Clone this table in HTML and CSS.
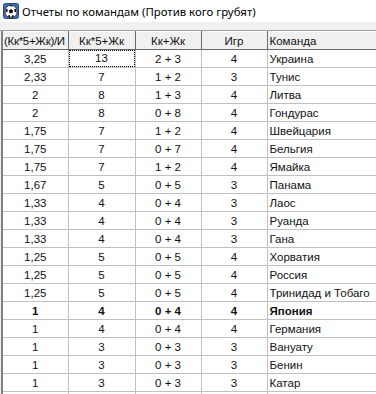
FILE: index.html
```html
<!DOCTYPE html>
<html>
<head>
  <meta charset="utf-8">
  <link rel="stylesheet" href="styles.css">
</head>
<body>
  <div class="titlebar">
    <svg class="app-icon" width="16" height="16" viewBox="0 0 16 16">
      <rect x="0.5" y="0.5" width="15" height="15" rx="2" fill="#3d6fb6" stroke="#24497f"/>
      <circle cx="8" cy="8.5" r="6.2" fill="#fff" stroke="#222" stroke-width="0.8"/>
      <polygon points="8,6 10.2,7.6 9.4,10.2 6.6,10.2 5.8,7.6" fill="#111"/>
      <path d="M3 5.5 L4.8 6.6 L4.4 9 L2.4 9.5 Z" fill="#111"/>
      <path d="M13 5.5 L11.2 6.6 L11.6 9 L13.6 9.5 Z" fill="#111"/>
      <path d="M6.2 2.6 L8 3.8 L9.8 2.6 Z" fill="#111"/>
      <path d="M5.2 12.2 L7 12.2 L7.6 14.4 L5.4 14 Z" fill="#111"/>
      <path d="M10.8 12.2 L9 12.2 L8.4 14.4 L10.6 14 Z" fill="#111"/>
    </svg>
    <span class="title-text">Отчеты по командам (Против кого грубят)</span>
  </div>

  <div class="toolbar-gap"></div>

  <div class="grid-wrap">
    <table class="grid">
      <colgroup>
        <col class="c1"><col class="c2"><col class="c3"><col class="c4"><col class="c5">
      </colgroup>
      <thead>
        <tr>
          <th class="tight">(Кк*5+Жк)/И</th>
          <th>Кк*5+Жк</th>
          <th>Кк+Жк</th>
          <th>Игр</th>
          <th class="left">Команда</th>
        </tr>
      </thead>
      <tbody>
        <tr><td>3,25</td><td class="focus"><span>13</span></td><td>2 + 3</td><td>4</td><td class="left">Украина</td></tr>
        <tr><td>2,33</td><td>7</td><td>1 + 2</td><td>3</td><td class="left">Тунис</td></tr>
        <tr><td>2</td><td>8</td><td>1 + 3</td><td>4</td><td class="left">Литва</td></tr>
        <tr><td>2</td><td>8</td><td>0 + 8</td><td>4</td><td class="left">Гондурас</td></tr>
        <tr><td>1,75</td><td>7</td><td>1 + 2</td><td>4</td><td class="left">Швейцария</td></tr>
        <tr><td>1,75</td><td>7</td><td>0 + 7</td><td>4</td><td class="left">Бельгия</td></tr>
        <tr><td>1,75</td><td>7</td><td>1 + 2</td><td>4</td><td class="left">Ямайка</td></tr>
        <tr><td>1,67</td><td>5</td><td>0 + 5</td><td>3</td><td class="left">Панама</td></tr>
        <tr><td>1,33</td><td>4</td><td>0 + 4</td><td>3</td><td class="left">Лаос</td></tr>
        <tr><td>1,33</td><td>4</td><td>0 + 4</td><td>3</td><td class="left">Руанда</td></tr>
        <tr><td>1,33</td><td>4</td><td>0 + 4</td><td>3</td><td class="left">Гана</td></tr>
        <tr><td>1,25</td><td>5</td><td>0 + 5</td><td>4</td><td class="left">Хорватия</td></tr>
        <tr><td>1,25</td><td>5</td><td>0 + 5</td><td>4</td><td class="left">Россия</td></tr>
        <tr><td>1,25</td><td>5</td><td>0 + 5</td><td>4</td><td class="left">Тринидад и Тобаго</td></tr>
        <tr class="bold"><td>1</td><td>4</td><td>0 + 4</td><td>4</td><td class="left">Япония</td></tr>
        <tr><td>1</td><td>4</td><td>0 + 4</td><td>4</td><td class="left">Германия</td></tr>
        <tr><td>1</td><td>3</td><td>0 + 3</td><td>3</td><td class="left">Вануату</td></tr>
        <tr><td>1</td><td>3</td><td>0 + 3</td><td>3</td><td class="left">Бенин</td></tr>
        <tr><td>1</td><td>3</td><td>0 + 3</td><td>3</td><td class="left">Катар</td></tr>
        <tr><td>&nbsp;</td><td></td><td></td><td></td><td class="left"></td></tr>
      </tbody>
    </table>
  </div>
</body>
</html>
```

FILE: styles.css
```css
body {
  margin: 0;
  width: 376px;
  height: 394px;
  overflow: hidden;
  background: #f0f0f0;
  font-family: "Liberation Sans", Arial, sans-serif;
  color: #000;
}

.titlebar {
  height: 22px;
  display: flex;
  align-items: center;
  background: #fff;
  padding-left: 3px;
}

.app-icon {
  flex: none;
  margin-right: 3px;
}

.title-text {
  font-family: "Noto Sans", "Open Sans", sans-serif;
  font-size: 11.4px;
  color: #000;
}

.toolbar-gap {
  height: 8px;
  background: #f0f0f0;
  border-bottom: 1px solid #a0a0a0;
}

.grid-wrap {
  border-left: 2px solid #808080;
  margin-left: 1px;
  background: #fff;
  height: 363px;
  overflow: hidden;
}

.grid {
  border-collapse: collapse;
  table-layout: fixed;
  width: 402px;
  font-size: 11.5px;
  color: #111;
}

.c1 { width: 65px; }
.c2 { width: 67px; }
.c3 { width: 66px; }
.c4 { width: 66px; }
.c5 { width: 138px; }

.grid th {
  height: 17px;
  padding: 0;
  background: #f0f0f0;
  font-weight: normal;
  text-align: center;
  border-right: 1px solid #696969;
  border-bottom: 1px solid #696969;
  border-top: 1px solid #fff;
  white-space: nowrap;
  overflow: hidden;
}

.grid th.tight {
  text-align: left;
  padding-left: 1px;
  letter-spacing: -0.3px;
}

.grid td {
  height: 17px;
  padding: 0;
  text-align: center;
  border-right: 1px solid #c0c0c0;
  border-bottom: 1px solid #c0c0c0;
  white-space: nowrap;
  overflow: hidden;
}

.grid .left {
  text-align: left;
  padding-left: 2px;
}

.grid td.focus span {
  display: block;
  height: 15px;
  line-height: 15px;
  border: 1px dotted #000;
}

.grid tr.bold td {
  font-weight: bold;
}
```
